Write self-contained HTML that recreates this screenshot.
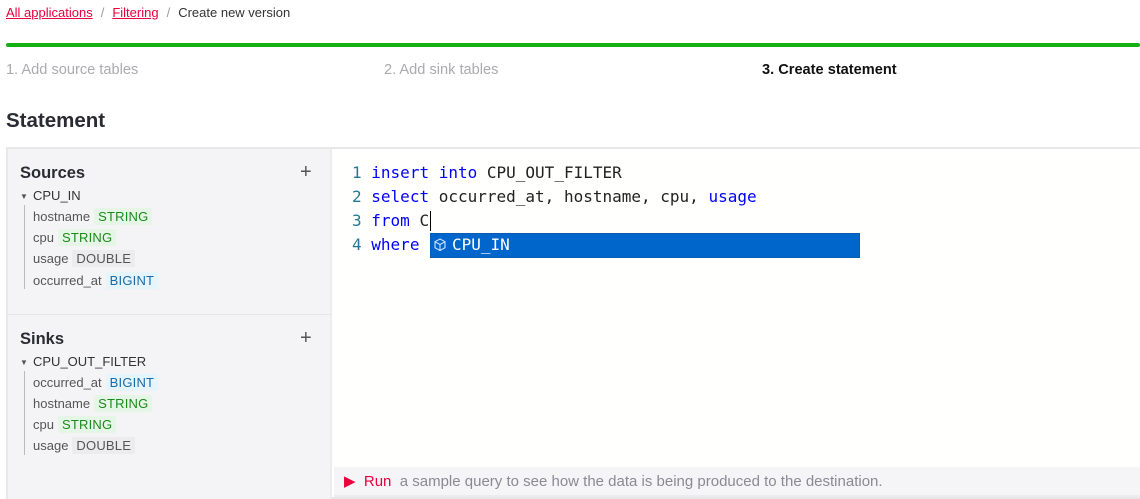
<!DOCTYPE html>
<html><head><style>
*{margin:0;padding:0;box-sizing:border-box}
body{width:1140px;height:499px;background:#fff;font-family:"Liberation Sans",sans-serif;position:relative;overflow:hidden;color:#222}
.a{position:absolute;white-space:nowrap}
.bc{top:5px;left:6px;font-size:13px;color:#333}
.bc a{color:#e8003d;text-decoration:underline}
.bc .s{color:#999;margin:0 8px}
.bar{top:43px;left:6px;width:1134px;height:4px;background:#14b014;border-radius:2px}
.st{top:62px;font-size:14.6px;color:#aaaab0}
h1{position:absolute;top:109px;left:6px;font-size:20.5px;font-weight:bold;color:#2b2b33}
.box{top:147px;left:6px;width:1134px;height:352px;border:2px solid #e8e8ea;border-right:none;background:#fffffd}
.side{top:149px;left:8px;width:324px;height:350px;background:#f4f4f6;border-right:2px solid #ececee}
.hd{font-size:16.5px;font-weight:bold;color:#2b2b33}
.plus{font-size:20px;color:#555;font-weight:300}
.tn{font-size:13px;color:#333}
.tri{font-size:8px;color:#555}
.f{font-size:13px;color:#555}
.t{padding:1px 4px;border-radius:2px;margin-left:4px;letter-spacing:0.2px}
.S{background:#e6f6e6;color:#1a8a1a}
.D{background:#ececee;color:#555}
.B{background:#e6f4fc;color:#1a6aa8}
.vl{width:1px;background:#bbb;left:24px}
.code{font-family:"DejaVu Sans Mono",monospace;font-size:16px;left:352px}
.ln{color:#237893}
.kw{color:#0000ff}
.ac{top:233px;left:430px;width:430px;height:25px;background:#0066cc;border:1px solid #0a5cb0}
.ft{top:467px;left:334px;width:806px;height:28px;background:#f5f5f7;font-size:15px;color:#8a8a92;padding:5px 0 0 10px}
</style></head><body>
<div class="a bc"><a>All applications</a><span class="s">/</span><a>Filtering</a><span class="s">/</span>Create new version</div>
<div class="a bar"></div>
<div class="a st" style="left:6px">1. Add source tables</div>
<div class="a st" style="left:384px">2. Add sink tables</div>
<div class="a st" style="left:762px;color:#111;font-weight:bold">3. Create statement</div>
<h1>Statement</h1>
<div class="a box"></div>
<div class="a side"></div>
<div class="a hd" style="left:20px;top:164px">Sources</div>
<div class="a plus" style="left:300px;top:161px">+</div>
<div class="a tri" style="left:20px;top:192px">▼</div><div class="a tn" style="left:33px;top:188px">CPU_IN</div>
<div class="a vl" style="top:205px;height:84px"></div>
<div class="a f" style="left:33px;top:209px">hostname<span class="t S">STRING</span></div>
<div class="a f" style="left:33px;top:230px">cpu<span class="t S">STRING</span></div>
<div class="a f" style="left:33px;top:251px">usage<span class="t D">DOUBLE</span></div>
<div class="a f" style="left:33px;top:273px">occurred_at<span class="t B">BIGINT</span></div>
<div class="a" style="left:8px;top:314px;width:324px;height:1px;background:#e6e6e8"></div>
<div class="a hd" style="left:20px;top:330px">Sinks</div>
<div class="a plus" style="left:300px;top:327px">+</div>
<div class="a tri" style="left:20px;top:358px">▼</div><div class="a tn" style="left:33px;top:354px">CPU_OUT_FILTER</div>
<div class="a vl" style="top:371px;height:84px"></div>
<div class="a f" style="left:33px;top:375px">occurred_at<span class="t B">BIGINT</span></div>
<div class="a f" style="left:33px;top:396px">hostname<span class="t S">STRING</span></div>
<div class="a f" style="left:33px;top:417px">cpu<span class="t S">STRING</span></div>
<div class="a f" style="left:33px;top:438px">usage<span class="t D">DOUBLE</span></div>
<div class="a code" style="top:163px"><span class="ln">1</span> <span class="kw">insert into</span> CPU_OUT_FILTER</div>
<div class="a code" style="top:187px"><span class="ln">2</span> <span class="kw">select</span> occurred_at, hostname, cpu, <span class="kw">usage</span></div>
<div class="a code" style="top:211px"><span class="ln">3</span> <span class="kw">from</span> C</div>
<div class="a" style="left:430px;top:211px;width:1px;height:20px;background:#000"></div>
<div class="a code" style="top:235px"><span class="ln">4</span> <span class="kw">where</span></div>
<div class="a ac"></div>
<svg class="a" style="left:432px;top:237px" width="16" height="16" viewBox="0 0 16 16"><path d="M8 2l5 2.7v6L8 13.5 3 10.7v-6zM3 4.7l5 2.8 5-2.8M8 7.5v6" fill="none" stroke="#cfe4ff" stroke-width="1.1"/></svg>
<div class="a code" style="left:452px;top:235px;color:#fff">CPU_IN</div>
<div class="a ft"><span style="color:#e8003d">▶&nbsp;&nbsp;Run</span>&nbsp;&nbsp;a sample query to see how the data is being produced to the destination.</div>
<div class="a" style="left:334px;top:495px;width:806px;height:2px;background:#ececee"></div>
</body></html>
